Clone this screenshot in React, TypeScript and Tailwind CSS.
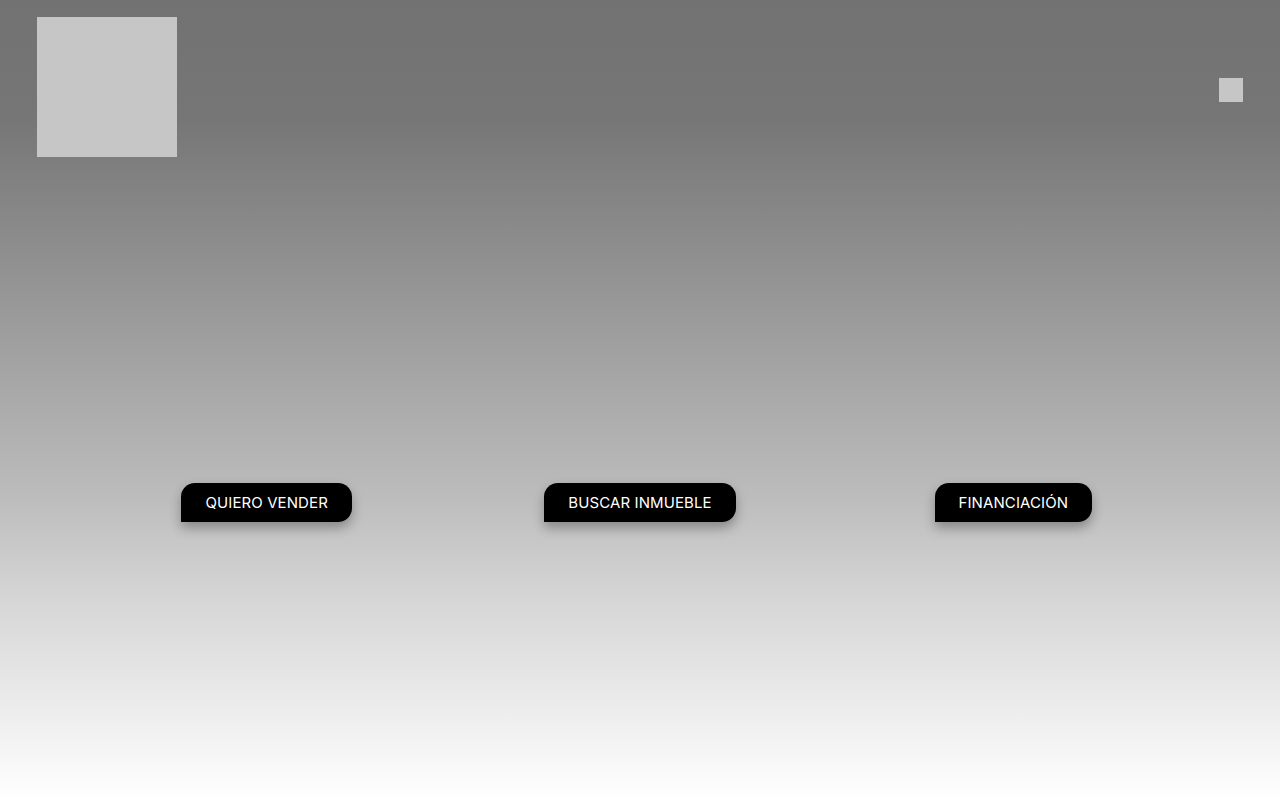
import React from 'react';

const actions = ['QUIERO VENDER', 'BUSCAR INMUEBLE', 'FINANCIACIÓN'];

export default function App() {
  return (
    <div
      className="w-full h-[800px] flex flex-col bg-[linear-gradient(to_bottom,#727272_0%,#767676_15%,#bcbcbc_62%,#d6d6d6_75%,#ffffff_100%)]"
      style={{ fontFamily: 'Inter, "Liberation Sans", sans-serif' }}
    >
      {/* Header */}
      <header className="flex items-start justify-between pl-[37px] pr-[37px] pt-[17px]">
        <div className="w-[140px] h-[140px] bg-[#c6c6c6]" />
        <button className="mt-[61px] w-6 h-6 bg-[#c6c6c6]" aria-label="menu" />
      </header>

      {/* Actions */}
      <div className="mx-auto w-[1120px] grid grid-cols-3 mt-[326px]">
        {actions.map((label) => (
          <div key={label} className="flex justify-center">
            <button className="h-[39px] px-6 pt-[2px] bg-black text-white text-[15px] tracking-[0.1px] rounded-tl-[14px] rounded-tr-[14px] rounded-br-[14px] shadow-[0_6px_12px_rgba(0,0,0,0.3)]">
              {label}
            </button>
          </div>
        ))}
      </div>
    </div>
  );
}
